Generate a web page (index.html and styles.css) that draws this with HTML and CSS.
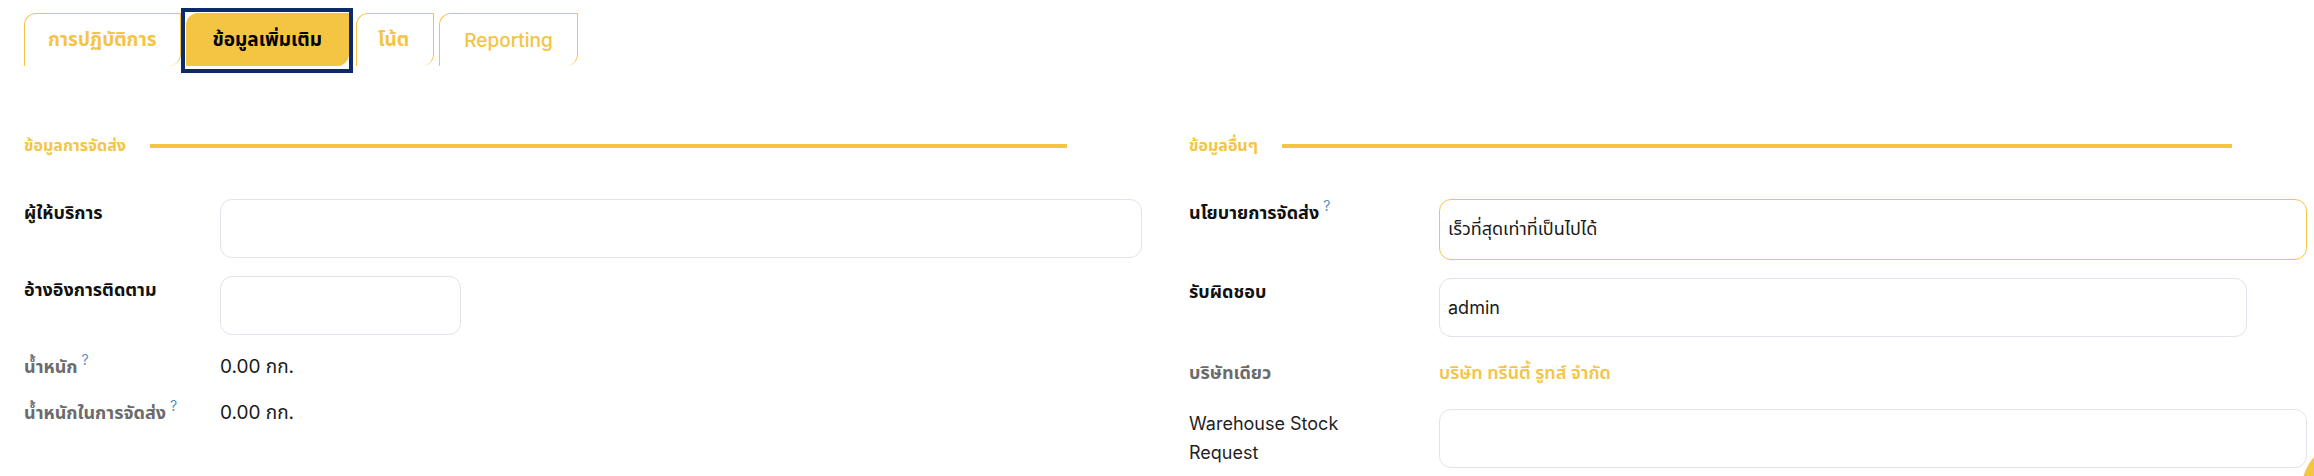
FILE: index.html
```html
<!DOCTYPE html>
<html lang="th">
<head>
<meta charset="utf-8">
<title>ข้อมูลเพิ่มเติม</title>
<link rel="stylesheet" href="styles.css">
</head>
<body>
<div class="page">
  <nav class="tabs">
    <a class="tab">การปฏิบัติการ</a>
    <a class="tab tab-active">ข้อมูลเพิ่มเติม</a>
    <a class="tab tab-short">โน้ต</a>
    <a class="tab tab-latin">Reporting</a>
  </nav>

  <div class="content">
    <section class="group">
      <div class="group-head">
        <span class="group-title">ข้อมูลการจัดส่ง</span>
        <span class="group-line"></span>
      </div>
      <div class="rows">
        <div class="row">
          <label class="label">ผู้ให้บริการ</label>
          <div class="field"><div class="input input-wide"></div></div>
        </div>
        <div class="row">
          <label class="label">อ้างอิงการติดตาม</label>
          <div class="field"><div class="input input-small"></div></div>
        </div>
        <div class="row row-text">
          <label class="label label-muted">น้ำหนัก<sup class="help">?</sup></label>
          <div class="value">0.00 กก.</div>
        </div>
        <div class="row row-text">
          <label class="label label-muted">น้ำหนักในการจัดส่ง<sup class="help">?</sup></label>
          <div class="value">0.00 กก.</div>
        </div>
      </div>
    </section>

    <section class="group group-right">
      <div class="group-head">
        <span class="group-title">ข้อมูลอื่นๆ</span>
        <span class="group-line"></span>
      </div>
      <div class="rows">
        <div class="row">
          <label class="label">นโยบายการจัดส่ง<sup class="help">?</sup></label>
          <div class="field"><div class="input input-focus">เร็วที่สุดเท่าที่เป็นไปได้</div></div>
        </div>
        <div class="row">
          <label class="label">รับผิดชอบ</label>
          <div class="field"><div class="input input-mid">admin</div></div>
        </div>
        <div class="row row-text row-loose">
          <label class="label label-muted">บริษัทเดียว</label>
          <div class="value value-link">บริษัท ทรีนิตี้ รูทส์ จำกัด</div>
        </div>
        <div class="row row-loose">
          <label class="label label-plain">Warehouse Stock Request</label>
          <div class="field"><div class="input"></div></div>
        </div>
      </div>
    </section>
  </div>
  <div class="fab"></div>
</div>
</body>
</html>
```

FILE: styles.css
```css
html, body {
  margin: 0;
  padding: 0;
  background: #ffffff;
}

body {
  font-family: "Inter", "Noto Sans Thai", "Noto Sans", "DejaVu Sans", sans-serif;
  color: #1f1f1f;
  font-size: 18px;
  overflow: hidden;
}

.page {
  width: 2314px;
  height: 476px;
  position: relative;
  overflow: hidden;
}

/* Tabs */
.tabs {
  display: flex;
  gap: 5px;
  padding: 13px 0 0 24px;
}

.tab {
  position: relative;
  height: 53px;
  box-sizing: border-box;
  display: flex;
  align-items: center;
  padding: 0 23px;
  border: 1px solid #f4c443;
  border-bottom: none;
  border-radius: 12px 0 12px 0;
  color: #f4c443;
  font-size: 19px;
  font-weight: 700;
  white-space: nowrap;
}

.tab-short {
  padding: 0 24px 0 21px;
}

.tab-latin {
  font-size: 19px;
  font-weight: 500;
  padding: 0 24px;
}

.tab-active {
  background: #f4c443;
  color: #000000;
  font-weight: 700;
  padding: 0 26px;
  margin-right: 2px;
}

.tab-active::before {
  content: "";
  position: absolute;
  left: -6px;
  right: -5px;
  top: -6px;
  bottom: -7px;
  border: 4px solid #0e2a6e;
}

/* Content */
.content {
  display: grid;
  grid-template-columns: 1118px 1118px;
  column-gap: 47px;
  padding: 70px 7px 0 24px;
}

.group-head {
  display: flex;
  align-items: center;
  height: 20px;
  margin-bottom: 43px;
}

.group-title {
  color: #f4c443;
  font-size: 16px;
  font-weight: 700;
  white-space: nowrap;
}

.group-line {
  flex: 1;
  height: 4px;
  background: #f4c443;
  margin: 0 75px 0 24px;
}

.rows {
  display: flex;
  flex-direction: column;
  gap: 18px;
}

.row {
  display: grid;
  grid-template-columns: 196px 1fr;
  align-items: start;
}

.group-right .row {
  grid-template-columns: 250px 1fr;
}

.group-right .row-loose {
  margin-top: 4px;
}

.label {
  font-size: 18px;
  line-height: 28px;
  font-weight: 700;
  color: #111111;
  padding-right: 12px;
}

.group-right .label {
  padding-right: 60px;
}

.label-muted {
  color: #6b6b6b;
}

.label-plain {
  font-weight: 400;
  color: #1f1f1f;
  line-height: 29px;
}

.help {
  color: #4f93bd;
  font-size: 14px;
  font-weight: 400;
  vertical-align: top;
  line-height: 14px;
  margin-left: 4px;
}

.value {
  font-size: 19px;
  line-height: 28px;
  color: #1a1a1a;
}

.value-link {
  color: #f4c443;
  font-size: 18px;
  font-weight: 600;
}

.field {
  display: flex;
}

.input {
  flex: 1;
  height: 59px;
  box-sizing: border-box;
  border: 1px solid #e2e2ec;
  border-radius: 12px;
  display: flex;
  align-items: center;
  padding: 0 8px;
  font-size: 18px;
  color: #1a1a1a;
}

.input-small {
  flex: 0 0 241px;
}

.input-mid {
  flex: 0 0 808px;
}

.input-focus {
  border-color: #f4c443;
  height: 61px;
}

.fab {
  position: absolute;
  left: 2302px;
  top: 442px;
  width: 92px;
  height: 92px;
  border-radius: 50%;
  background: #f4c443;
}
```
